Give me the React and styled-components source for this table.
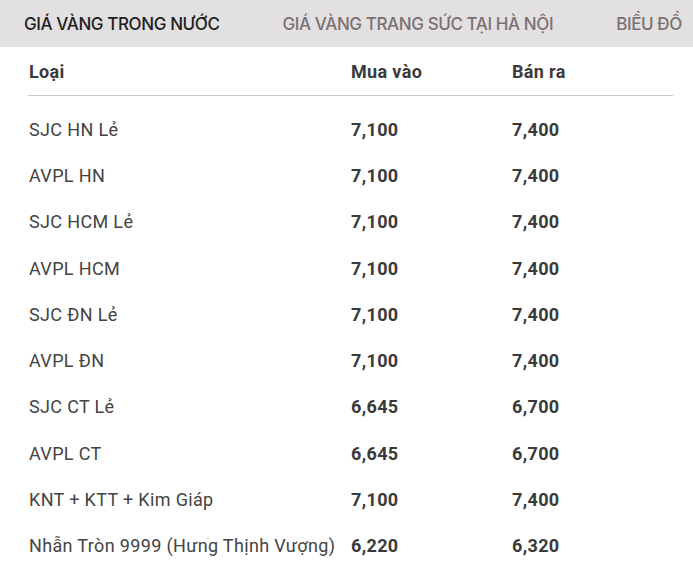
import React from 'react';
import styled, { createGlobalStyle } from 'styled-components';

const GlobalStyle = createGlobalStyle`
  html, body {
    margin: 0;
    padding: 0;
    background: #fff;
  }
  body {
    font-family: Roboto, "Liberation Sans", sans-serif;
  }
`;

const Wrapper = styled.div`
  width: 693px;
  height: 575px;
  overflow: hidden;
  background: #fff;
`;

const TabBar = styled.div`
  display: flex;
  align-items: center;
  gap: 63px;
  height: 47px;
  padding-left: 24px;
  background: #e2e0e1;
  white-space: nowrap;
  overflow: hidden;
`;

const Tab = styled.div`
  font-family: Inter, "Noto Sans", sans-serif;
  font-size: 17px;
  font-weight: 500;
  letter-spacing: -0.4px;
  color: ${p => (p.$active ? '#1e1e1e' : '#7b7071')};
  flex-shrink: 0;
`;

const Table = styled.div`
  margin-left: 28px;
  width: 645px;
`;

const Row = styled.div`
  display: grid;
  grid-template-columns: 323px 161px 161px;
  align-items: center;
  height: ${p => (p.$head ? '48px' : '46.3px')};
  border-bottom: ${p => (p.$head ? '1px solid #c9c9c9' : 'none')};
  margin-bottom: ${p => (p.$head ? '10px' : '0')};
`;

const Cell = styled.div`
  font-size: 18px;
  letter-spacing: 0.35px;
  white-space: nowrap;
  color: ${p => (p.$bold ? '#3a3a3a' : '#444')};
  font-weight: ${p => (p.$bold ? 700 : 400)};
  padding-left: ${p => (p.$first ? '1px' : '0')};
`;

const rows = [
  ['SJC HN Lẻ', '7,100', '7,400'],
  ['AVPL HN', '7,100', '7,400'],
  ['SJC HCM Lẻ', '7,100', '7,400'],
  ['AVPL HCM', '7,100', '7,400'],
  ['SJC ĐN Lẻ', '7,100', '7,400'],
  ['AVPL ĐN', '7,100', '7,400'],
  ['SJC CT Lẻ', '6,645', '6,700'],
  ['AVPL CT', '6,645', '6,700'],
  ['KNT + KTT + Kim Giáp', '7,100', '7,400'],
  ['Nhẫn Tròn 9999 (Hưng Thịnh Vượng)', '6,220', '6,320'],
];

export default function App() {
  return (
    <Wrapper>
      <GlobalStyle />
      <TabBar>
        <Tab $active>GIÁ VÀNG TRONG NƯỚC</Tab>
        <Tab>GIÁ VÀNG TRANG SỨC TẠI HÀ NỘI</Tab>
        <Tab>BIỂU ĐỒ</Tab>
      </TabBar>
      <Table>
        <Row $head>
          <Cell $bold $first>Loại</Cell>
          <Cell $bold>Mua vào</Cell>
          <Cell $bold>Bán ra</Cell>
        </Row>
        {rows.map(([name, buy, sell]) => (
          <Row key={name}>
            <Cell $first>{name}</Cell>
            <Cell $bold>{buy}</Cell>
            <Cell $bold>{sell}</Cell>
          </Row>
        ))}
      </Table>
    </Wrapper>
  );
}
